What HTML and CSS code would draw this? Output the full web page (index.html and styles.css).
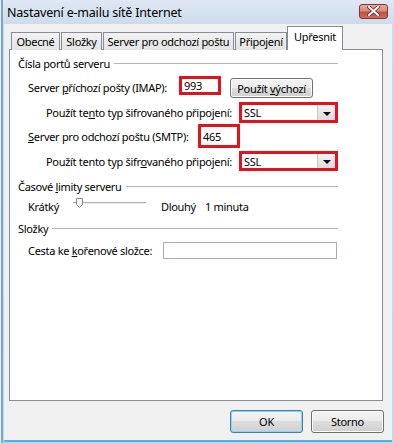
FILE: index.html
```html
<!DOCTYPE html>
<html lang="cs">
<head>
    <meta charset="UTF-8">
    <title>Nastavení e-mailu sítě Internet</title>
    <link rel="stylesheet" href="styles.css">
</head>
<body>
    <div class="window">
        <div class="titlebar">
            <span class="title">Nastavení e-mailu sítě Internet</span>
            <span class="close-btn">
                <svg width="13" height="10" viewBox="0 0 13 10">
                    <path d="M2 1 L11 9 M11 1 L2 9" stroke="#6b2a2a" stroke-width="3.6" stroke-linecap="square"/>
                    <path d="M2 1 L11 9 M11 1 L2 9" stroke="#fff" stroke-width="2" stroke-linecap="square"/>
                </svg>
            </span>
        </div>

        <div class="frame">
            <div class="client">
                <div class="tabs">
                    <div class="tab tab-general">Obecné</div>
                    <div class="tab tab-folders">Složky</div>
                    <div class="tab tab-smtp">Server pro odchozí poštu</div>
                    <div class="tab tab-conn">Připojení</div>
                    <div class="tab tab-adv active">Upřesnit</div>
                </div>

                <div class="panel">
                    <div class="group-title"><span>Čísla portů serveru</span></div>

                    <div class="row row-imap">
                        <span class="lbl lbl-imap">Server <u>p</u>říchozí pošty (IMAP):</span>
                        <div class="port-box port-imap">993</div>
                        <button class="btn btn-default">Použít <u>v</u>ýchozí</button>
                    </div>
                    <div class="row row-sub row-enc1">
                        <span class="lbl lbl-enc">Použít te<u>n</u>to typ šifrovaného připojení:</span>
                        <div class="ssl-select"><span class="ssl-value">SSL</span><span class="drop-btn"></span></div>
                    </div>
                    <div class="row row-smtp">
                        <span class="lbl lbl-smtp"><u>S</u>erver pro odchozí poštu (SMTP):</span>
                        <div class="port-box port-smtp">465</div>
                    </div>
                    <div class="row row-sub row-enc2">
                        <span class="lbl lbl-enc">Použít tento typ šifr<u>o</u>vaného připojení:</span>
                        <div class="ssl-select"><span class="ssl-value">SSL</span><span class="drop-btn"></span></div>
                    </div>

                    <div class="group-title group-timeout"><span>Časové <u>l</u>imity serveru</span></div>
                    <div class="row row-slider">
                        <span class="lbl lbl-short">Krátký</span>
                        <div class="slider">
                            <span class="track"></span>
                            <svg class="thumb" width="7" height="10" viewBox="0 0 7 10">
                                <path d="M0.5 0.5 H6.5 V6.5 L3.5 9.5 L0.5 6.5 Z" fill="#f4f4f4" stroke="#8a8a8a"/>
                            </svg>
                        </div>
                        <span class="lbl-long">Dlouhý</span>
                        <span class="lbl-value">1 minuta</span>
                    </div>

                    <div class="group-title group-folders"><span>Složky</span></div>
                    <div class="row row-root">
                        <span class="lbl lbl-root">Cesta ke <u>k</u>ořenové složce:</span>
                        <div class="text-input"></div>
                    </div>
                </div>

                <div class="footer">
                    <button class="btn btn-ok">OK</button>
                    <button class="btn btn-cancel">Storno</button>
                </div>
            </div>
        </div>
    </div>
</body>
</html>
```

FILE: styles.css
```css
/* Window frame */
body {
    margin: 0;
    font-family: "Noto Sans", "DejaVu Sans", sans-serif;
    font-size: 11px;
    letter-spacing: -0.3px;
    white-space: nowrap;
    color: #000;
    background: #fff;
}

.window {
    width: 394px;
    height: 443px;
    display: flex;
    flex-direction: column;
    background: linear-gradient(to bottom, #dfe8f3 0, #cddbeb 24px, #c6d6e9 100%);
    box-shadow: inset 1px 0 0 #e8f0f9, inset 3px 0 0 #79a5d6;
}

.titlebar {
    height: 24px;
    display: flex;
    align-items: center;
    justify-content: space-between;
    padding: 0 6px 0 7px;
}

.title {
    font-size: 12.5px;
    letter-spacing: -0.2px;
    color: #000;
}

.close-btn {
    width: 29px;
    height: 15px;
    margin-top: -2px;
    display: flex;
    align-items: center;
    justify-content: center;
    border: 1px solid #7e3535;
    border-radius: 3px;
    background: linear-gradient(to bottom, #e9a99b 0, #d88a7a 45%, #c2503f 55%, #d06c58 100%);
    box-sizing: border-box;
}

.frame {
    flex: 1;
    display: flex;
    padding: 0 4px 0 4px;
}

.client {
    flex: 1;
    background: #f0f0f0;
    border-bottom: 2px solid #5aaee2;
    margin-bottom: 1px;
}

/* Tabs */
.tabs {
    display: flex;
    align-items: flex-end;
    height: 26px;
    padding-left: 7px;
    margin-bottom: -1px;
    position: relative;
}

.tab {
    height: 18px;
    box-sizing: border-box;
    border: 1px solid #898c95;
    border-bottom: none;
    background: linear-gradient(to bottom, #f2f2f2, #e3e3e3);
    display: flex;
    align-items: center;
    justify-content: center;
    margin-right: 1px;
    padding-bottom: 1px;
}

.tab-general { width: 49px; }
.tab-folders { width: 41px; }
.tab-smtp { width: 131px; }
.tab-conn { width: 52px; margin-right: 0; }

.tab.active {
    width: 56px;
    height: 24px;
    background: #fff;
    padding-bottom: 4px;
    position: relative;
    z-index: 1;
}

/* Panel */
.panel {
    margin: 0 9px 0 5px;
    height: 352px;
    box-sizing: border-box;
    background: #fff;
    border: 1px solid #898c95;
    padding: 6px 44px 0 8px;
}

.group-title {
    display: flex;
    align-items: center;
    height: 14px;
}

.group-title::after {
    content: "";
    flex: 1;
    border-top: 1px solid #b4b4b4;
    margin-left: 4px;
}

.group-timeout { margin-top: 8px; }
.group-folders { margin-top: 6px; }

.row {
    display: flex;
    align-items: center;
    padding-left: 10px;
}

.row-sub { padding-left: 28px; }

.row-imap { height: 22px; margin-top: 6px; }
.row-enc1 { height: 21px; margin-top: 4px; }
.row-smtp { height: 24px; margin-top: 1px; }
.row-enc2 { height: 20px; margin-top: 3px; }
.row-slider { height: 18px; margin-top: 4px; }
.row-root { height: 17px; margin-top: 7px; }

.lbl { flex: none; }
.lbl-imap { width: 151px; }
.lbl-smtp { width: 170px; }
.lbl-enc { width: 193px; }
.lbl-root { width: 135px; }
.lbl-short { width: 45px; }

/* Highlighted fields */
.port-box {
    width: 42px;
    box-sizing: border-box;
    border: 3px solid #e3131e;
    background: #fff;
    display: flex;
    align-items: center;
    padding-left: 2px;
}

.port-imap { height: 19px; align-self: flex-start; }
.port-smtp { height: 24px; }

.ssl-select {
    width: 99px;
    height: 100%;
    box-sizing: border-box;
    border: 3px solid #e3131e;
    background: #fff;
    display: flex;
    align-items: stretch;
}

.ssl-value {
    flex: 1;
    display: flex;
    align-items: center;
    padding-left: 2px;
}

.drop-btn {
    width: 17px;
    border-left: 1px solid #c8c8c8;
    background: linear-gradient(to bottom, #f4f4f4, #dcdcdc);
    display: flex;
    align-items: center;
    justify-content: center;
}

.drop-btn::after {
    content: "";
    border-left: 4px solid transparent;
    border-right: 4px solid transparent;
    border-top: 4px solid #000;
    margin-top: 2px;
}

/* Buttons */
.btn {
    font-family: inherit;
    font-size: 11px;
    letter-spacing: inherit;
    color: #000;
    border: 1px solid #707070;
    border-radius: 3px;
    background: linear-gradient(to bottom, #f2f2f2 0, #ebebeb 50%, #dddddd 50%, #cfcfcf 100%);
    box-shadow: inset 0 0 0 1px #fcfcfc;
    padding: 0;
}

.btn-default {
    width: 83px;
    height: 20px;
    margin-left: 9px;
    align-self: flex-end;
}

/* Slider */
.slider {
    width: 73px;
    height: 10px;
    position: relative;
    display: flex;
    align-items: center;
    margin-top: -6px;
}

.track {
    flex: 1;
    height: 1px;
    background: #b0b0b0;
    border-bottom: 1px solid #e8e8e8;
}

.thumb {
    position: absolute;
    left: 3px;
    top: 0;
}

.lbl-long { margin-left: 15px; }
.lbl-value { margin-left: 9px; }

.text-input {
    width: 174px;
    height: 17px;
    box-sizing: border-box;
    border: 1px solid #a5acb5;
    background: #fff;
}

/* Footer */
.footer {
    display: flex;
    justify-content: flex-end;
    gap: 8px;
    margin: 9px 8px 0 0;
}

.btn-ok,
.btn-cancel {
    width: 73px;
    height: 23px;
}

.btn-ok {
    border-color: #3c7fb1;
    box-shadow: inset 0 0 0 1px #8ed3f5;
}
```
